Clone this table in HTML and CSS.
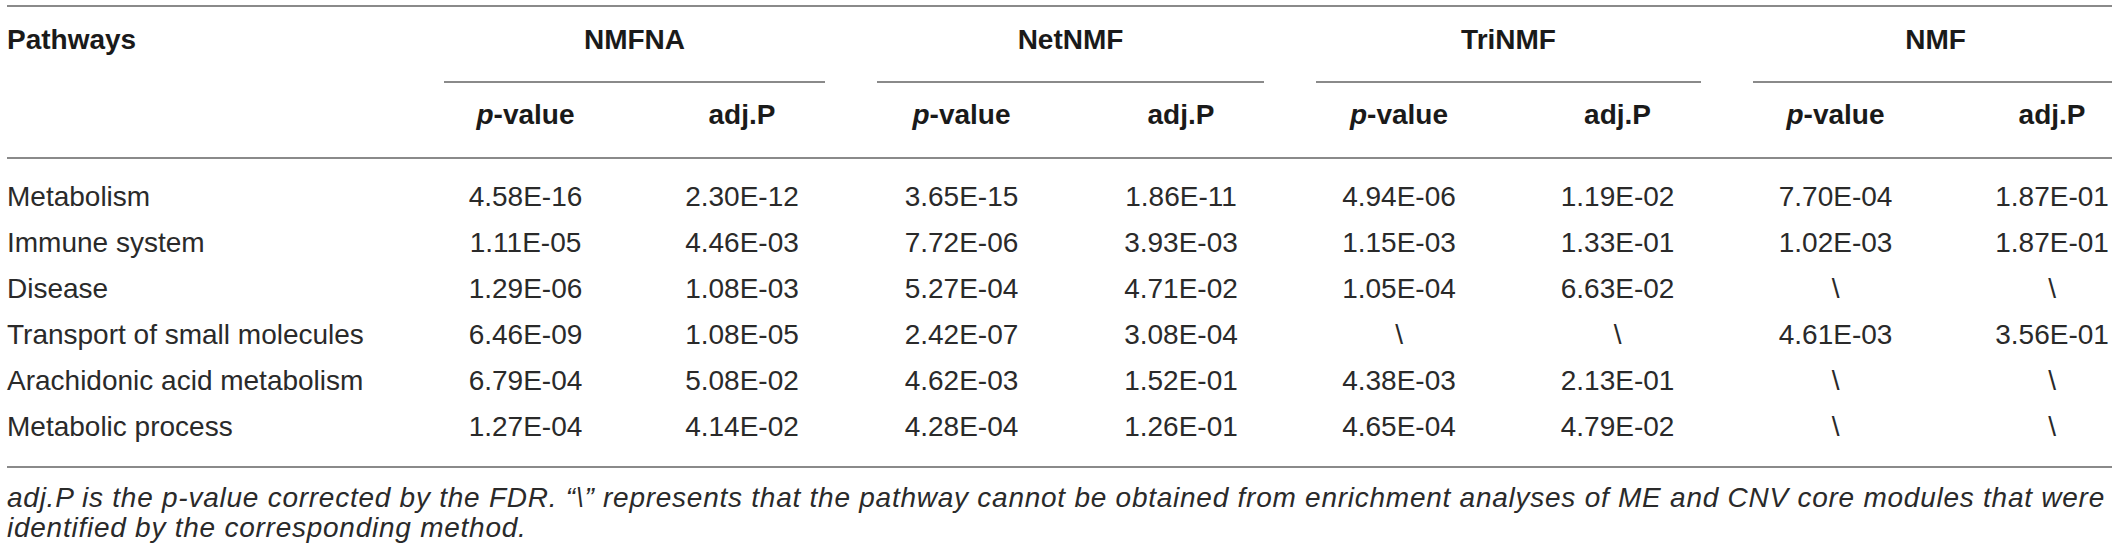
FILE: index.html
```html
<!DOCTYPE html>
<html lang="en">
<head>
  <meta charset="UTF-8" />
  <title>Pathway enrichment</title>
  <link rel="stylesheet" href="styles.css">
</head>
<body>

  <div class="wrap">
    <table class="results">
      <colgroup>
        <col class="c-name">
        <col class="c1"><col class="c2">
        <col class="c3"><col class="c4">
        <col class="c5"><col class="c6">
        <col class="c7"><col class="c8">
      </colgroup>
      <thead>
        <tr class="top">
          <th class="name" rowspan="2">Pathways</th>
          <th colspan="2"><div class="group">NMFNA</div></th>
          <th colspan="2"><div class="group">NetNMF</div></th>
          <th colspan="2"><div class="group">TriNMF</div></th>
          <th colspan="2" class="last"><div class="group">NMF</div></th>
        </tr>
        <tr class="sub">
          <th><i>p</i>-value</th><th>adj.P</th>
          <th><i>p</i>-value</th><th>adj.P</th>
          <th><i>p</i>-value</th><th>adj.P</th>
          <th><i>p</i>-value</th><th class="last">adj.P</th>
        </tr>
      </thead>
      <tbody>
        <tr>
          <td class="name">Metabolism</td>
          <td>4.58E-16</td><td>2.30E-12</td>
          <td>3.65E-15</td><td>1.86E-11</td>
          <td>4.94E-06</td><td>1.19E-02</td>
          <td>7.70E-04</td><td class="last">1.87E-01</td>
        </tr>
        <tr>
          <td class="name">Immune system</td>
          <td>1.11E-05</td><td>4.46E-03</td>
          <td>7.72E-06</td><td>3.93E-03</td>
          <td>1.15E-03</td><td>1.33E-01</td>
          <td>1.02E-03</td><td class="last">1.87E-01</td>
        </tr>
        <tr>
          <td class="name">Disease</td>
          <td>1.29E-06</td><td>1.08E-03</td>
          <td>5.27E-04</td><td>4.71E-02</td>
          <td>1.05E-04</td><td>6.63E-02</td>
          <td>\</td><td class="last">\</td>
        </tr>
        <tr>
          <td class="name">Transport of small molecules</td>
          <td>6.46E-09</td><td>1.08E-05</td>
          <td>2.42E-07</td><td>3.08E-04</td>
          <td>\</td><td>\</td>
          <td>4.61E-03</td><td class="last">3.56E-01</td>
        </tr>
        <tr>
          <td class="name">Arachidonic acid metabolism</td>
          <td>6.79E-04</td><td>5.08E-02</td>
          <td>4.62E-03</td><td>1.52E-01</td>
          <td>4.38E-03</td><td>2.13E-01</td>
          <td>\</td><td class="last">\</td>
        </tr>
        <tr>
          <td class="name">Metabolic process</td>
          <td>1.27E-04</td><td>4.14E-02</td>
          <td>4.28E-04</td><td>1.26E-01</td>
          <td>4.65E-04</td><td>4.79E-02</td>
          <td>\</td><td class="last">\</td>
        </tr>
      </tbody>
    </table>

    <p class="note">adj.P is the p-value corrected by the FDR. “\” represents that the pathway cannot be obtained from enrichment analyses of ME and CNV core modules that were identified by the corresponding method.</p>
  </div>

</body>
</html>
```

FILE: styles.css
```css
* { box-sizing: border-box; margin: 0; padding: 0; }

html, body {
  background: #fff;
  font-family: 'Liberation Sans', Arial, sans-serif;
  color: #2a2a2a;
}

.wrap {
  padding: 5px 6px 0 7px;
}

.results {
  width: 2105px;
  table-layout: fixed;
  border-collapse: collapse;
  font-size: 28px;
  border-top: 2px solid #8a8a8a;
  border-bottom: 2px solid #8a8a8a;
}

.c-name { width: 411px; }
.c1 { width: 215px; }
.c2 { width: 218px; }
.c3 { width: 221px; }
.c4 { width: 218px; }
.c5 { width: 218px; }
.c6 { width: 219px; }
.c7 { width: 217px; }
.c8 { width: 168px; }

th {
  font-weight: 700;
  color: #1a1a1a;
  text-align: center;
  line-height: 34px;
  white-space: nowrap;
}

th.name {
  text-align: left;
  vertical-align: top;
  padding-top: 16px;
  border-bottom: 2px solid #8a8a8a;
}

.top th {
  padding-top: 16px;
}

.group {
  margin: 0 26px;
  padding-bottom: 24px;
  border-bottom: 2px solid #8a8a8a;
}

.top th.last .group {
  margin-right: 0;
  padding-left: 6px;
}

.sub th {
  padding: 15px 0 25px;
  border-bottom: 2px solid #8a8a8a;
}

.sub th.last,
td.last {
  padding-left: 48px;
}

td {
  text-align: center;
  line-height: 46px;
  white-space: nowrap;
}

td.name {
  text-align: left;
}

tbody tr:first-child td { padding-top: 15px; }
tbody tr:last-child td { padding-bottom: 16px; }

.note {
  width: 2105px;
  margin-top: 15px;
  font-size: 28px;
  font-style: italic;
  line-height: 30px;
  letter-spacing: 0.75px;
  color: #2a2a2a;
}
```
